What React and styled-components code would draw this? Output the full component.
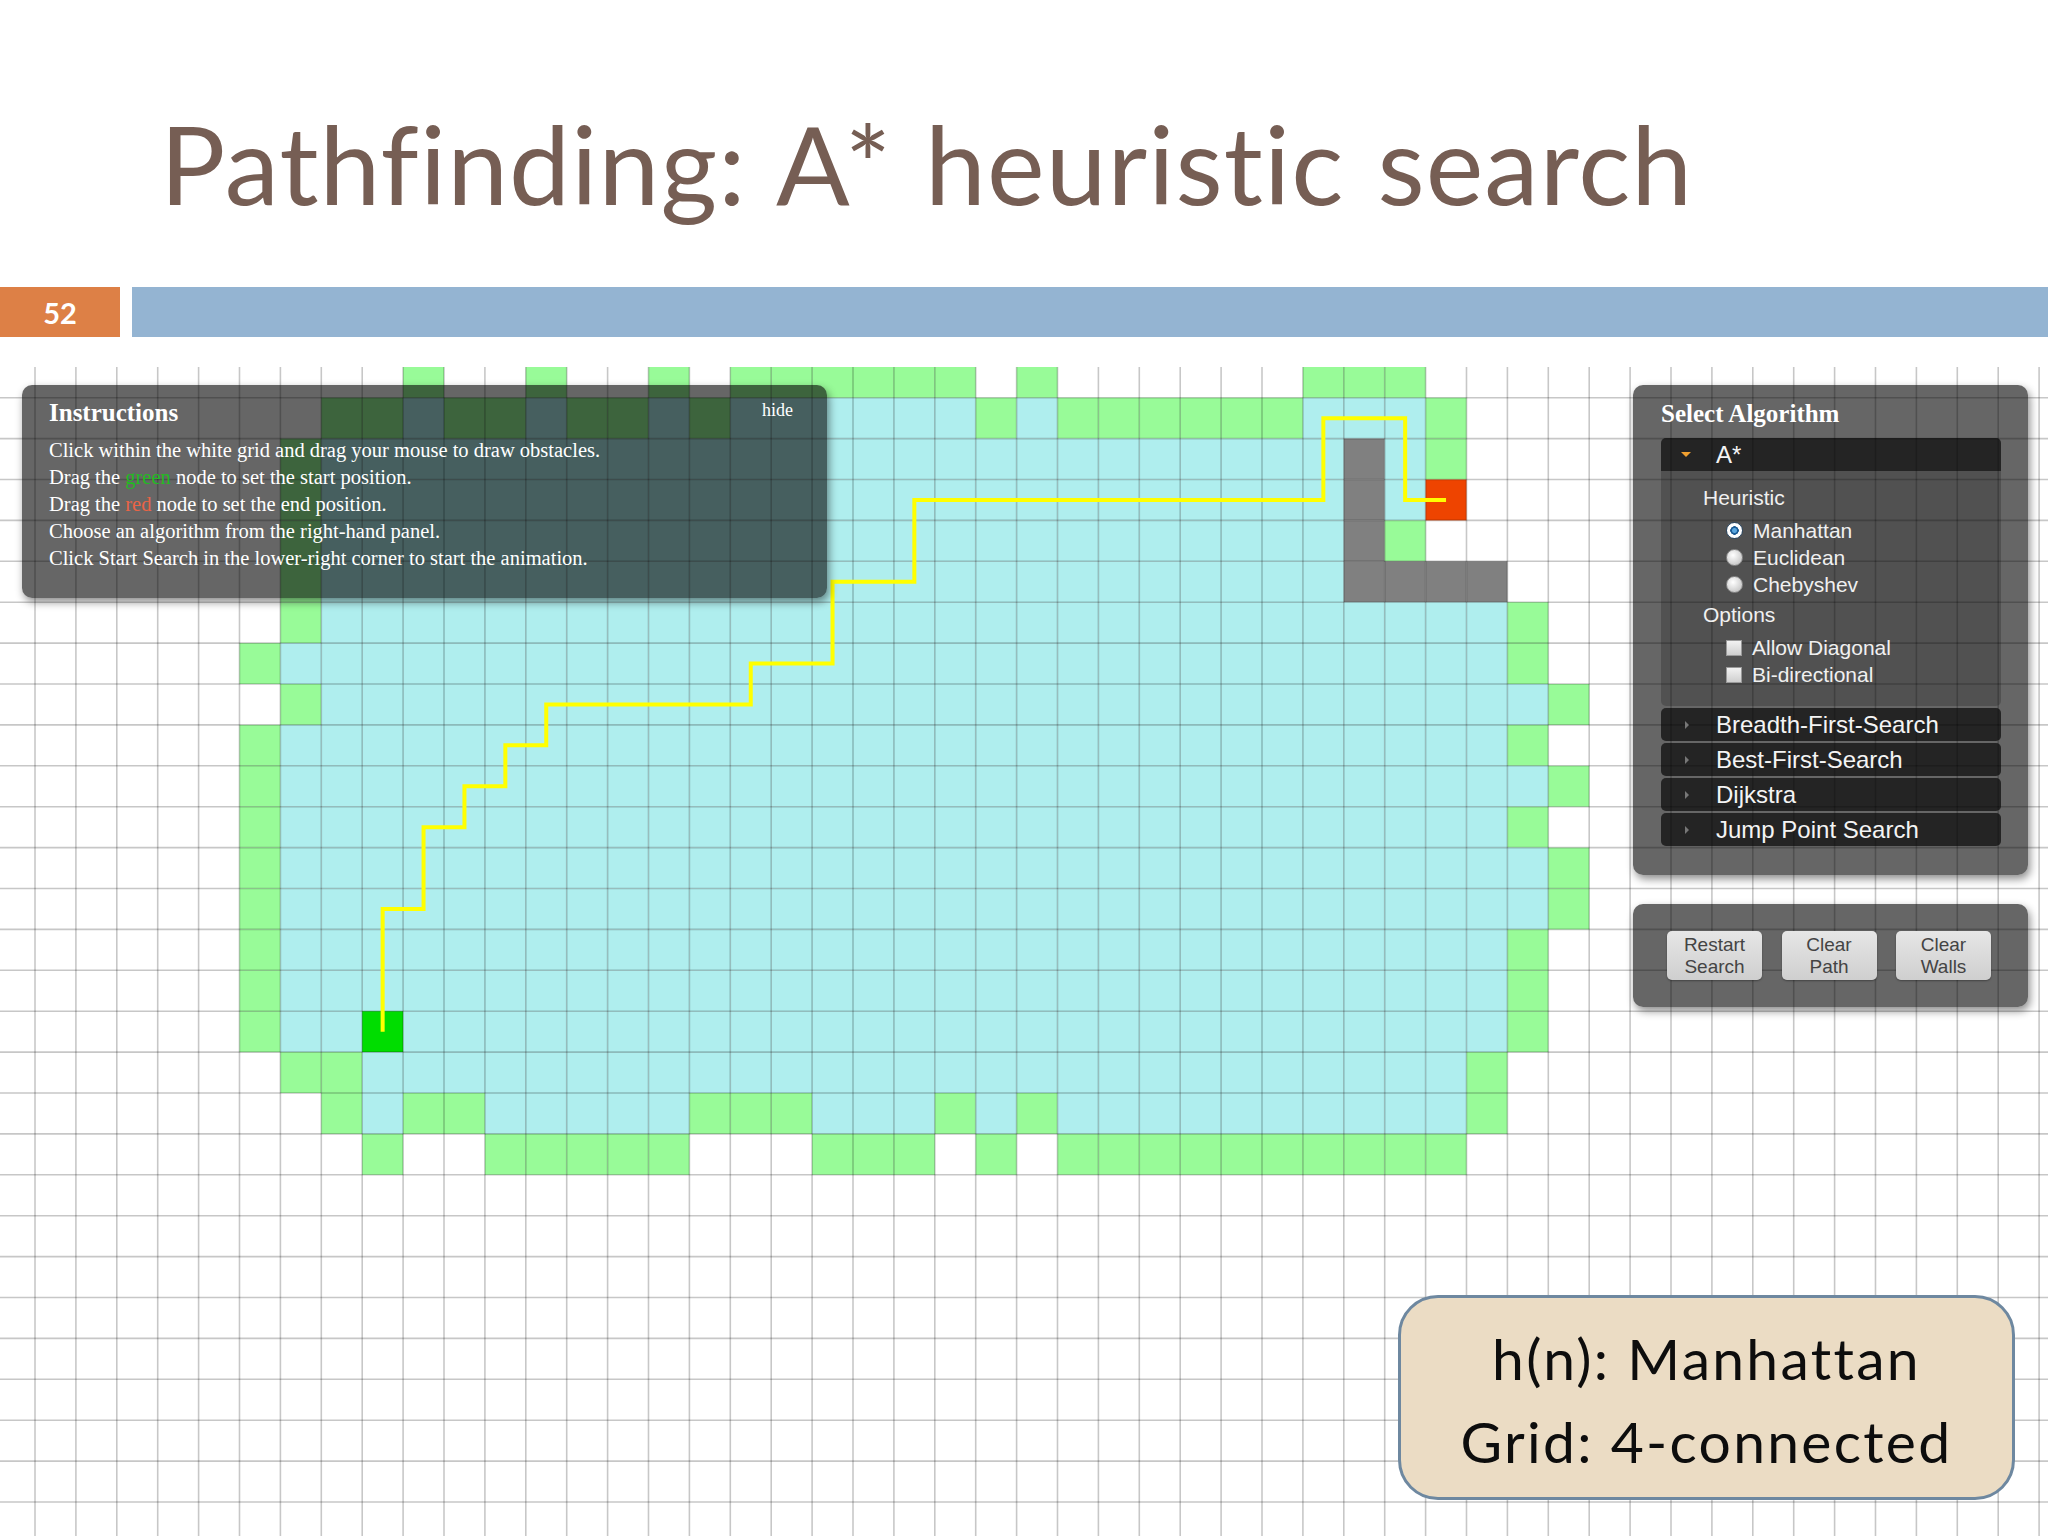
import React from "react";
import styled, { createGlobalStyle } from "styled-components";

const CELL = 40.9;
const OX = 35;
const OY = 30.7;
const STAGE_W = 2048;
const STAGE_H = 1169;

const FILL = {
  o: "#98fb98",
  c: "#afeeee",
  w: "#808080",
  s: "#00dd00",
  e: "#ee4400",
};

// [from column, to column, kind] per grid row
const SEGMENTS = {
  "-1": [[9, 9, "o"], [12, 12, "o"], [15, 15, "o"], [17, 22, "o"], [24, 24, "o"], [31, 33, "o"]],
  0: [
    [7, 8, "o"], [9, 9, "c"], [10, 11, "o"], [12, 12, "c"], [13, 14, "o"], [15, 15, "c"],
    [16, 16, "o"], [17, 22, "c"], [23, 23, "o"], [24, 24, "c"], [25, 30, "o"], [31, 33, "c"], [34, 34, "o"],
  ],
  1: [[6, 6, "o"], [7, 31, "c"], [32, 32, "w"], [33, 33, "c"], [34, 34, "o"]],
  2: [[6, 6, "o"], [7, 31, "c"], [32, 32, "w"], [33, 33, "c"], [34, 34, "e"]],
  3: [[6, 6, "o"], [7, 31, "c"], [32, 32, "w"], [33, 33, "o"]],
  4: [[6, 6, "o"], [7, 31, "c"], [32, 35, "w"]],
  5: [[6, 6, "o"], [7, 35, "c"], [36, 36, "o"]],
  6: [[5, 5, "o"], [6, 35, "c"], [36, 36, "o"]],
  7: [[6, 6, "o"], [7, 36, "c"], [37, 37, "o"]],
  8: [[5, 5, "o"], [6, 35, "c"], [36, 36, "o"]],
  9: [[5, 5, "o"], [6, 36, "c"], [37, 37, "o"]],
  10: [[5, 5, "o"], [6, 35, "c"], [36, 36, "o"]],
  11: [[5, 5, "o"], [6, 36, "c"], [37, 37, "o"]],
  12: [[5, 5, "o"], [6, 36, "c"], [37, 37, "o"]],
  13: [[5, 5, "o"], [6, 35, "c"], [36, 36, "o"]],
  14: [[5, 5, "o"], [6, 35, "c"], [36, 36, "o"]],
  15: [[5, 5, "o"], [6, 35, "c"], [8, 8, "s"], [36, 36, "o"]],
  16: [[6, 7, "o"], [8, 34, "c"], [35, 35, "o"]],
  17: [
    [7, 7, "o"], [8, 8, "c"], [9, 10, "o"], [11, 15, "c"], [16, 18, "o"], [19, 21, "c"],
    [22, 22, "o"], [23, 23, "c"], [24, 24, "o"], [25, 34, "c"], [35, 35, "o"],
  ],
  18: [[8, 8, "o"], [11, 15, "o"], [19, 21, "o"], [23, 23, "o"], [25, 34, "o"]],
};

const PATH = [
  [8, 15], [8, 12], [9, 12], [9, 10], [10, 10], [10, 9], [11, 9], [11, 8], [12, 8], [12, 7],
  [17, 7], [17, 6], [19, 6], [19, 4], [21, 4], [21, 2], [31, 2], [31, 0], [33, 0], [33, 2], [34, 2],
];

const cells = [];
Object.entries(SEGMENTS).forEach(([row, segs]) => {
  segs.forEach(([from, to, kind]) => {
    for (let k = from; k <= to; k++) cells.push({ k, j: Number(row), kind });
  });
});

const colLines = [];
for (let k = -1; k <= 49; k++) colLines.push(OX + k * CELL);
const rowLines = [];
for (let j = -1; j <= 28; j++) rowLines.push(OY + j * CELL);

const pathPoints = PATH.map(
  ([k, j]) => `${OX + (k + 0.5) * CELL},${OY + (j + 0.5) * CELL}`
).join(" ");

const GlobalStyle = createGlobalStyle`
  html, body {
    margin: 0;
    padding: 0;
    background: #ffffff;
    overflow: hidden;
  }
`;

const GridCanvas = () => (
  <GridSvg width={STAGE_W} height={STAGE_H} viewBox={`0 0 ${STAGE_W} ${STAGE_H}`}>
    <rect width={STAGE_W} height={STAGE_H} fill="#ffffff" />
    {cells.map((c, i) => (
      <rect
        key={i}
        x={OX + c.k * CELL}
        y={OY + c.j * CELL}
        width={CELL}
        height={CELL}
        fill={FILL[c.kind]}
      />
    ))}
    <g stroke="rgba(0,0,0,0.22)" strokeWidth="1.6">
      {colLines.map((x) => (
        <line key={`c${x}`} x1={x} y1={0} x2={x} y2={STAGE_H} />
      ))}
      {rowLines.map((y) => (
        <line key={`r${y}`} x1={0} y1={y} x2={STAGE_W} y2={y} />
      ))}
    </g>
    <polyline points={pathPoints} fill="none" stroke="#ffff00" strokeWidth="4" />
  </GridSvg>
);

const algorithms = ["Breadth-First-Search", "Best-First-Search", "Dijkstra", "Jump Point Search"];

const App = () => {
  return (
    <>
      <GlobalStyle />
      <Slide>
        <TitleArea>
          <Title>Pathfinding: A* heuristic search</Title>
        </TitleArea>
        <HeaderBar>
          <SlideNumber>52</SlideNumber>
          <AccentBar />
        </HeaderBar>
        <Stage>
          <GridCanvas />

          <InstructionsPanel>
            <PanelHead>
              <PanelTitle>Instructions</PanelTitle>
              <Hide>hide</Hide>
            </PanelHead>
            <Instructions>
              <li>Click within the white grid and drag your mouse to draw obstacles.</li>
              <li>
                Drag the <Tint $color="#22bb22">green</Tint> node to set the start position.
              </li>
              <li>
                Drag the <Tint $color="#ea6446">red</Tint> node to set the end position.
              </li>
              <li>Choose an algorithm from the right-hand panel.</li>
              <li>Click Start Search in the lower-right corner to start the animation.</li>
            </Instructions>
          </InstructionsPanel>

          <SidePanels>
            <AlgorithmPanel>
              <PanelTitle>Select Algorithm</PanelTitle>
              <Accordion>
                <Item>
                  <ItemHeader $open>
                    <Caret $open />
                    A*
                  </ItemHeader>
                  <ItemBody>
                    <Heading>Heuristic</Heading>
                    <OptionList>
                      <Option>
                        <Radio $checked />
                        Manhattan
                      </Option>
                      <Option>
                        <Radio />
                        Euclidean
                      </Option>
                      <Option>
                        <Radio />
                        Chebyshev
                      </Option>
                    </OptionList>
                    <Heading>Options</Heading>
                    <OptionList>
                      <Option>
                        <Check />
                        Allow Diagonal
                      </Option>
                      <Option>
                        <Check />
                        Bi-directional
                      </Option>
                    </OptionList>
                  </ItemBody>
                </Item>
                {algorithms.map((name) => (
                  <Item key={name}>
                    <ItemHeader>
                      <Caret />
                      {name}
                    </ItemHeader>
                  </Item>
                ))}
              </Accordion>
            </AlgorithmPanel>

            <PlayPanel>
              <ControlButton>
                Restart
                <br />
                Search
              </ControlButton>
              <ControlButton>
                Clear
                <br />
                Path
              </ControlButton>
              <ControlButton>
                Clear
                <br />
                Walls
              </ControlButton>
            </PlayPanel>
          </SidePanels>

          <Callout>
            <span>h(n): Manhattan</span>
            <span>Grid: 4-connected</span>
          </Callout>
        </Stage>
      </Slide>
    </>
  );
};

export default App;

const Slide = styled.div`
  width: 2048px;
  height: 1536px;
  background: #ffffff;
  overflow: hidden;
  display: flex;
  flex-direction: column;
`;

const TitleArea = styled.header`
  height: 287px;
  box-sizing: border-box;
  padding: 108px 0 0 160px;
`;

const Title = styled.h1`
  margin: 0;
  font-family: Lato, "Liberation Sans", sans-serif;
  font-weight: 400;
  font-size: 109px;
  line-height: 109px;
  letter-spacing: 1.1px;
  word-spacing: 4px;
  color: #765e54;
  white-space: nowrap;
`;

const HeaderBar = styled.div`
  display: flex;
  gap: 12px;
  height: 50px;
`;

const SlideNumber = styled.div`
  width: 120px;
  background: #dd8046;
  color: #ffffff;
  font-family: Lato, "Liberation Sans", sans-serif;
  font-weight: 700;
  font-size: 29px;
  display: flex;
  align-items: center;
  justify-content: center;
`;

const AccentBar = styled.div`
  flex: 1;
  background: #94b4d2;
`;

const Stage = styled.section`
  position: relative;
  margin-top: 30px;
  height: ${STAGE_H}px;
  overflow: hidden;
`;

const GridSvg = styled.svg`
  display: block;
`;

const Panel = styled.div`
  background: rgba(0, 0, 0, 0.6);
  border-radius: 10px;
  box-shadow: 2px 4px 8px rgba(0, 0, 0, 0.45);
  color: #ffffff;
  box-sizing: border-box;
`;

const InstructionsPanel = styled(Panel)`
  position: absolute;
  top: 18px;
  left: 22px;
  width: 805px;
  height: 213px;
  padding: 13px 34px 0 27px;
`;

const PanelHead = styled.div`
  display: flex;
  justify-content: space-between;
  align-items: flex-start;
`;

const PanelTitle = styled.h3`
  margin: 0;
  font-family: "Liberation Serif", serif;
  font-weight: 700;
  font-size: 25px;
  line-height: 30px;
  color: #ffffff;
`;

const Hide = styled.span`
  margin-top: 2px;
  font-family: "Liberation Serif", serif;
  font-size: 18px;
  line-height: 20px;
  color: #ffffff;
`;

const Instructions = styled.ul`
  list-style: none;
  margin: 9px 0 0;
  padding: 0;
  font-family: "Liberation Serif", serif;
  font-size: 20.5px;
  line-height: 27px;
  color: #ffffff;
`;

const Tint = styled.span`
  color: ${(p) => p.$color};
`;

const SidePanels = styled.div`
  position: absolute;
  top: 18px;
  left: 1633px;
  width: 395px;
  display: flex;
  flex-direction: column;
  gap: 29px;
`;

const AlgorithmPanel = styled(Panel)`
  height: 490px;
  padding: 14px 27px 0 28px;
`;

const Accordion = styled.div`
  margin-top: 9px;
  display: flex;
  flex-direction: column;
  gap: 2px;
  font-family: "Liberation Sans", Arial, sans-serif;
`;

const Item = styled.div`
  border-radius: 5px;
  overflow: hidden;
  background: rgba(0, 0, 0, 0.2);
`;

const ItemHeader = styled.div`
  height: 33px;
  display: flex;
  align-items: center;
  background: rgba(0, 0, 0, 0.55);
  font-size: 24px;
  color: #f4f4f4;
`;

const Caret = styled.span`
  width: 0;
  height: 0;
  ${(p) =>
    p.$open
      ? `
    margin: 0 25px 0 20px;
    border-left: 5px solid transparent;
    border-right: 5px solid transparent;
    border-top: 5px solid #f0a030;
  `
      : `
    margin: 0 27px 0 24px;
    border-top: 4px solid transparent;
    border-bottom: 4px solid transparent;
    border-left: 4px solid #777777;
  `}
`;

const ItemBody = styled.div`
  padding: 13px 0 15px 42px;
  font-size: 21px;
  line-height: 27px;
  color: #f0f0f0;
`;

const Heading = styled.div`
  margin-bottom: 6px;
`;

const OptionList = styled.div`
  margin: 0 0 3px 23px;
  display: flex;
  flex-direction: column;
`;

const Option = styled.label`
  display: flex;
  align-items: center;
  gap: 10px;
`;

const Radio = styled.span`
  width: 17px;
  height: 17px;
  border-radius: 50%;
  box-sizing: border-box;
  background: ${(p) =>
    p.$checked
      ? "radial-gradient(circle, #5aa7e0 0 2px, #1b5c96 3px 4px, #ffffff 4.5px)"
      : "radial-gradient(circle at 40% 35%, #ffffff, #b8b8b8)"};
  border: 1px solid ${(p) => (p.$checked ? "#2d4a66" : "#8a8a8a")};
`;

const Check = styled.span`
  width: 16px;
  height: 16px;
  box-sizing: border-box;
  background: linear-gradient(#f2f2f2, #cfcfcf);
  border: 1px solid #9a9a9a;
`;

const PlayPanel = styled(Panel)`
  height: 103px;
  padding: 27px 34px;
  display: flex;
  gap: 19.5px;
`;

const ControlButton = styled.button`
  width: 95px;
  height: 49px;
  padding: 0;
  border: none;
  border-radius: 5px;
  background: linear-gradient(#e6e6e6, #cfcfcf);
  box-shadow: 0 1px 2px rgba(0, 0, 0, 0.35);
  font-family: "Liberation Sans", Arial, sans-serif;
  font-size: 19px;
  line-height: 22px;
  color: #444444;
  text-align: center;
`;

const Callout = styled.div`
  position: absolute;
  left: 1398px;
  top: 928px;
  width: 617px;
  height: 205px;
  box-sizing: border-box;
  padding-top: 4px;
  border: 3px solid #6e88a0;
  border-radius: 40px;
  background: #ebdcc4;
  display: flex;
  flex-direction: column;
  align-items: center;
  justify-content: center;
  font-family: Lato, "Liberation Sans", sans-serif;
  font-size: 57px;
  line-height: 83px;
  letter-spacing: 2.3px;
  color: #0d0d0d;
`;
